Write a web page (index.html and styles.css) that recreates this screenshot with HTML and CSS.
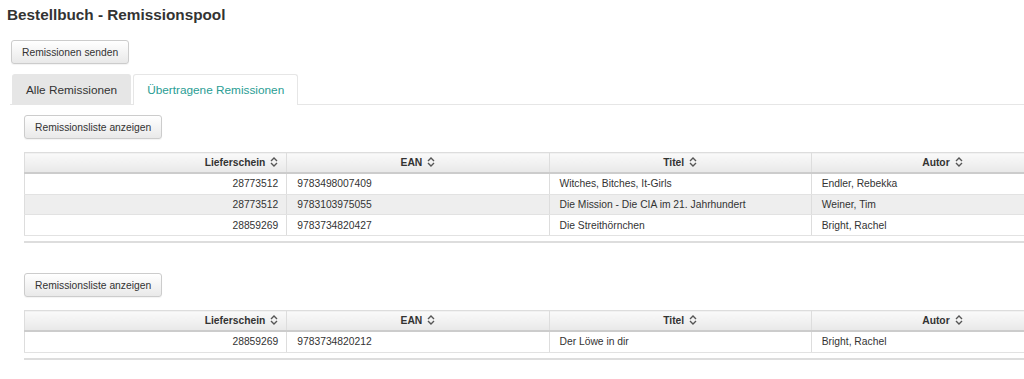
FILE: index.html
```html
<!DOCTYPE html>
<html lang="de">
<head>
    <meta charset="UTF-8">
    <title>Bestellbuch - Remissionspool</title>
    <link rel="stylesheet" href="styles.css">
</head>
<body>

<h1>Bestellbuch - Remissionspool</h1>

<div class="page">
    <button class="btn">Remissionen senden</button>

    <div class="tabs">
        <div class="tab active">Alle Remissionen</div>
        <div class="tab">Übertragene Remissionen</div>
    </div>

    <div class="tab-content">
        <div class="block">
            <button class="btn">Remissionsliste anzeigen</button>
            <table class="grid">
                <thead>
                    <tr>
                        <th class="num">Lieferschein <span class="sort"></span></th>
                        <th>EAN <span class="sort"></span></th>
                        <th>Titel <span class="sort"></span></th>
                        <th>Autor <span class="sort"></span></th>
                    </tr>
                </thead>
                <tbody>
                    <tr><td class="num">28773512</td><td>9783498007409</td><td>Witches, Bitches, It-Girls</td><td>Endler, Rebekka</td></tr>
                    <tr><td class="num">28773512</td><td>9783103975055</td><td>Die Mission - Die CIA im 21. Jahrhundert</td><td>Weiner, Tim</td></tr>
                    <tr><td class="num">28859269</td><td>9783734820427</td><td>Die Streithörnchen</td><td>Bright, Rachel</td></tr>
                </tbody>
            </table>
        </div>

        <div class="block">
            <button class="btn">Remissionsliste anzeigen</button>
            <table class="grid">
                <thead>
                    <tr>
                        <th class="num">Lieferschein <span class="sort"></span></th>
                        <th>EAN <span class="sort"></span></th>
                        <th>Titel <span class="sort"></span></th>
                        <th>Autor <span class="sort"></span></th>
                    </tr>
                </thead>
                <tbody>
                    <tr><td class="num">28859269</td><td>9783734820212</td><td>Der Löwe in dir</td><td>Bright, Rachel</td></tr>
                </tbody>
            </table>
        </div>
    </div>
</div>

<script>
    // sort arrows (up/down chevrons) in every header cell
    const sortIcon = '<svg width="8" height="10" viewBox="0 0 8 10"><path d="M1 4 L4 1 L7 4 M1 6 L4 9 L7 6" fill="none" stroke="#555" stroke-width="1.4"/></svg>';
    document.querySelectorAll('.sort').forEach(el => el.innerHTML = sortIcon);
</script>

</body>
</html>
```

FILE: styles.css
```css
html, body {
    overflow: hidden;
}
body {
    margin: 0;
    font-family: "Liberation Sans", Arial, sans-serif;
    color: #333;
    background: #fff;
}
h1 {
    font-size: 15.3px;
    font-weight: bold;
    margin: 0;
    padding: 6px 7px 0;
    line-height: 18px;
}
.page {
    padding: 16px 0 0 11px;
}
.btn {
    font-family: inherit;
    font-size: 10.3px;
    color: #333;
    height: 24px;
    padding: 0 10px;
    border: 1px solid #ccc;
    border-radius: 3px;
    background: linear-gradient(#fff, #e9e9e9);
    box-shadow: 0 1px 1px rgba(0,0,0,0.05);
    cursor: pointer;
}
.tabs {
    display: flex;
    margin-top: 10px;
    margin-left: -1px;
    border-bottom: 1px solid #e6e6e6;
}
.tab {
    font-size: 11.8px;
    line-height: 30px;
    padding: 0 13px;
    margin-left: 2px;
    margin-bottom: -1px;
    color: #2a9d94;
    border: 1px solid #e6e6e6;
    border-bottom: none;
    border-radius: 3px 3px 0 0;
    background: #fff;
}
.tab.active {
    color: #333;
    background: #e6e6e6;
    border-color: #e6e6e6;
}
.tab-content {
    padding: 10px 0 0 13px;
}
.block {
    padding-bottom: 5px;
    border-bottom: 2px solid #ddd;
    margin-bottom: 31px;
    width: 1100px;
}
.block + .block {
    margin-top: -1px;
}
.grid {
    margin-top: 13px;
    width: 1050px;
    table-layout: fixed;
    border-collapse: collapse;
    font-size: 10.3px;
    border: 1px solid #ddd;
}
.grid th {
    font-weight: bold;
    height: 19px;
    padding: 0 8px;
    background: linear-gradient(#fafafa, #e8e8e8);
    border-left: 1px solid #ddd;
    border-bottom: 2px solid #ccc;
    text-align: center;
}
.grid td {
    height: 19.7px;
    padding: 0 10px;
    border-left: 1px solid #ddd;
    border-bottom: 1px solid #e2e2e2;
    white-space: nowrap;
}
.grid .num {
    text-align: right;
    padding-right: 8px;
}
.grid tbody tr:nth-child(even) td {
    background: #eee;
}
.sort {
    display: inline-block;
    vertical-align: -1px;
    margin-left: 2px;
}
.sort svg {
    display: block;
}
```
